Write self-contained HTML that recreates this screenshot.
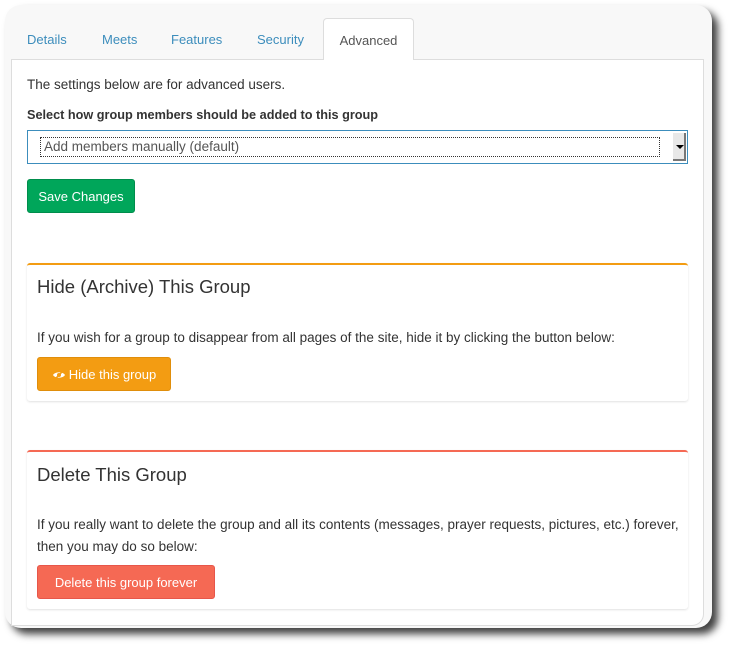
<!DOCTYPE html>
<html><head><meta charset="utf-8"><style>
*{box-sizing:border-box;margin:0;padding:0}
body{width:735px;height:650px;background:#fff;font-family:"Liberation Sans",sans-serif;color:#333;position:relative;overflow:hidden}
.win{position:absolute;left:5px;top:5px;width:707px;height:623px;background:#f8f8f8;border-radius:16px;box-shadow:6px 6px 8px rgba(0,0,0,0.75)}
.a{position:absolute;white-space:nowrap}
.tab{position:absolute;top:32px;font-size:13px;color:#3c8dbc}
.panel{position:absolute;left:11px;top:59px;width:693px;height:567px;background:#fff;border:1px solid #ddd;border-bottom-right-radius:12px}
.act{position:absolute;left:323px;top:18px;width:91px;height:42px;background:#fff;border:1px solid #ddd;border-bottom:none;border-radius:4px 4px 0 0;z-index:2;font-size:13px;color:#555;text-align:center;padding-top:14px}
.box{position:absolute;left:27px;width:661px;background:#fff;border-radius:3px;box-shadow:0 1px 2px rgba(0,0,0,0.12);border-top:2px solid}
.btn{position:absolute;color:#fff;font-size:13px;border-radius:3px;text-align:center;line-height:33px}
.t{font-size:13.5px}
</style></head><body>
<div class="win"></div>
<div class="tab" style="left:27px">Details</div>
<div class="tab" style="left:102px">Meets</div>
<div class="tab" style="left:171px">Features</div>
<div class="tab" style="left:257px">Security</div>
<div class="panel"></div>
<div class="act">Advanced</div>
<div class="a t" style="left:27px;top:77px">The settings below are for advanced users.</div>
<div class="a" style="left:27px;top:108px;font-size:12.7px;font-weight:bold">Select how group members should be added to this group</div>
<div class="a" style="left:27px;top:130px;width:661px;height:34px;border:1px solid #3c8dbc;background:#fff">
 <div class="a" style="left:12px;top:6px;width:620px;height:20px;border:1px dotted #333;font-size:13.5px;color:#555;padding:1px 0 0 3px">Add members manually (default)</div>
 <div class="a" style="left:645px;top:2px;width:13px;height:28px;background:#e8e8e8;border-right:2px solid #777;border-bottom:2px solid #777"><div style="position:absolute;left:3px;top:12px;border-left:4px solid transparent;border-right:4px solid transparent;border-top:4px solid #000"></div></div>
</div>
<div class="btn" style="left:27px;top:179px;width:108px;height:34px;background:#00a65a;border:1px solid #008d4c">Save Changes</div>

<div class="box" style="top:263px;height:138px;border-color:#f39c12"></div>
<div class="a" style="left:37px;top:276px;font-size:18.5px;color:#333">Hide (Archive) This Group</div>
<div class="a t" style="left:37px;top:330px">If you wish for a group to disappear from all pages of the site, hide it by clicking the button below:</div>
<div class="btn" style="left:37px;top:357px;width:134px;height:34px;background:#f39c12;border:1px solid #e08e0b"><svg width="14" height="10" viewBox="0 0 14 10" style="vertical-align:-1px;margin-right:3px"><path d="M1 5C3 1.5 11 1.5 13 5C11 8.5 3 8.5 1 5Z" fill="#fff"/><circle cx="7" cy="5" r="2" fill="#f39c12"/><path d="M3 9L11 1" stroke="#f39c12" stroke-width="1.5"/></svg>Hide this group</div>

<div class="box" style="top:450px;height:159px;border-color:#f56954"></div>
<div class="a" style="left:37px;top:464px;font-size:18.5px;color:#333">Delete This Group</div>
<div class="a t" style="left:37px;top:517px">If you really want to delete the group and all its contents (messages, prayer requests, pictures, etc.) forever,</div>
<div class="a t" style="left:37px;top:539px">then you may do so below:</div>
<div class="btn" style="left:37px;top:565px;width:178px;height:34px;background:#f56954;border:1px solid #e7564a">Delete this group forever</div>
</body></html>
